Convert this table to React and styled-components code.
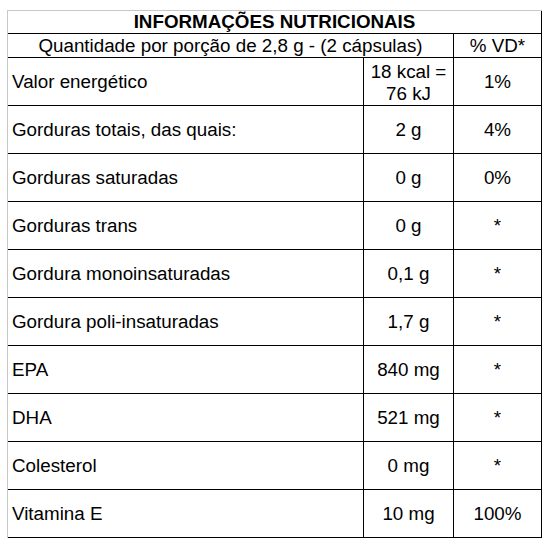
import React from 'react';
import styled, { createGlobalStyle } from 'styled-components';

const GlobalStyle = createGlobalStyle`
  html, body {
    margin: 0;
    padding: 0;
    background: #fff;
  }
  body {
    font-family: "Liberation Sans", Arial, sans-serif;
    color: #000;
  }
`;

const Page = styled.div`
  padding: 10px 0 0 7px;
`;

const Table = styled.div`
  display: grid;
  grid-template-columns: 356px 90px 88px;
  grid-template-rows: 23px 24px 48px repeat(9, 48px);
  width: 535px;
  box-sizing: border-box;
  border-left: 1px solid #c8c8c8;
  border-top: 1px solid #c8c8c8;
  font-size: 18.8px;
`;

const Cell = styled.div`
  box-sizing: border-box;
  border-right: 1px solid #000;
  border-bottom: 1px solid #000;
  display: flex;
  align-items: center;
  justify-content: ${(p) => (p.$left ? 'flex-start' : 'center')};
  padding: ${(p) => (p.$left ? '0 0 0 4px' : '0')};
  grid-column: ${(p) => (p.$span ? `span ${p.$span}` : 'auto')};
  white-space: nowrap;
`;

const Title = styled(Cell)`
  font-weight: bold;
`;

const Stack = styled.div`
  text-align: center;
  line-height: 22px;
  padding-top: 3px;
`;

const rows = [
  ['Gorduras totais, das quais:', '2 g', '4%'],
  ['Gorduras saturadas', '0 g', '0%'],
  ['Gorduras trans', '0 g', '*'],
  ['Gordura monoinsaturadas', '0,1 g', '*'],
  ['Gordura poli-insaturadas', '1,7 g', '*'],
  ['EPA', '840 mg', '*'],
  ['DHA', '521 mg', '*'],
  ['Colesterol', '0 mg', '*'],
  ['Vitamina E', '10 mg', '100%'],
];

export default function App() {
  return (
    <Page>
      <GlobalStyle />
      <Table>
        <Title $span={3}>INFORMAÇÕES NUTRICIONAIS</Title>
        <Cell $span={2}>Quantidade por porção de 2,8 g - (2 cápsulas)</Cell>
        <Cell>% VD*</Cell>
        <Cell $left>Valor energético</Cell>
        <Cell>
          <Stack>
            18 kcal =<br />76 kJ
          </Stack>
        </Cell>
        <Cell>1%</Cell>
        {rows.map(([label, qty, vd]) => (
          <React.Fragment key={label}>
            <Cell $left>{label}</Cell>
            <Cell>{qty}</Cell>
            <Cell>{vd}</Cell>
          </React.Fragment>
        ))}
      </Table>
    </Page>
  );
}
